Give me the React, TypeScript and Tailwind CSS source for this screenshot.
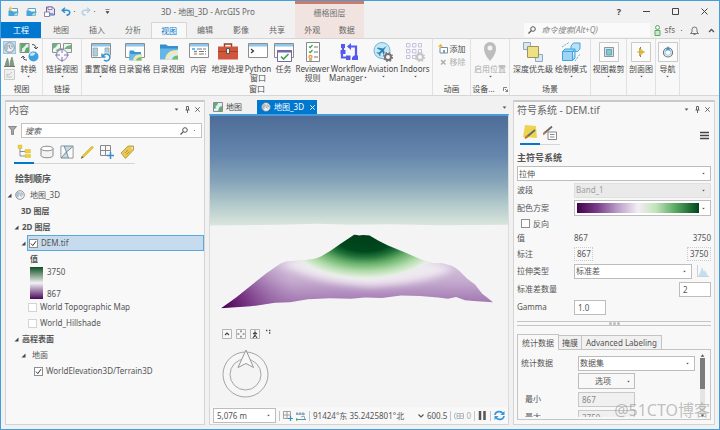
import React from "react";

type Kids = { children?: React.ReactNode };

const FONT = "font-['Noto_Sans','Noto_Sans_CJK_SC',sans-serif]";

/* ---------- small shared pieces ---------- */

function Caret({ className = "" }: { className?: string }) {
  return (
    <svg viewBox="0 0 6 4" className={`h-[3px] w-[5px] shrink-0 ${className}`} aria-hidden="true">
      <path d="M0.5 0.5h5L3 3.6z" fill="#555" />
    </svg>
  );
}

function Svg({ children, className = "size-5", box = "0 0 20 20" }: Kids & { className?: string; box?: string }) {
  return (
    <svg viewBox={box} className={`shrink-0 ${className}`} fill="none" aria-hidden="true">
      {children}
    </svg>
  );
}

function Select({ id, label, value, className = "", disabled = false }: { id: string; label: string; value: string; className?: string; disabled?: boolean }) {
  return (
    <span className={`flex h-[15px] items-center border pr-1 ${disabled ? "border-[#e0e0e0] bg-[#eaeaea] text-[#a0a0a0]" : "border-[#bdbdbd] bg-white"} ${className}`}>
      <select id={id} aria-label={label} disabled={disabled} className="h-full min-w-0 flex-1 appearance-none bg-transparent pl-px outline-none">
        <option>{value}</option>
      </select>
      <Caret className="scale-75" />
    </span>
  );
}

function Check({ id, label, checked = false, faint = false, className = "" }: { id: string; label: string; checked?: boolean; faint?: boolean; className?: string }) {
  return (
    <label htmlFor={id} className={`flex items-center gap-[3px] ${className}`}>
      <span className="grid size-[9px]">
        <input id={id} type="checkbox" defaultChecked={checked} className={`peer col-start-1 row-start-1 size-[9px] appearance-none border bg-white ${faint ? "border-[#d4d4d4]" : "border-[#8f8f8f]"}`} />
        <svg viewBox="0 0 9 9" className="pointer-events-none invisible col-start-1 row-start-1 size-[9px] peer-checked:visible" fill="none" aria-hidden="true">
          <path d="M2 4.6l1.800 2L7 2.200" stroke="#333" strokeWidth="1" />
        </svg>
      </span>
      <span>{label}</span>
    </label>
  );
}

function Twisty() {
  return (
    <svg viewBox="0 0 5 5" className="size-[5px] shrink-0" aria-hidden="true">
      <path d="M4.500 0.500v4h-4z" fill="#444" />
    </svg>
  );
}

/* ---------- icons ---------- */

function Globe({ className = "size-[11px]" }: { className?: string }) {
  return (
    <Svg className={className} box="0 0 12 12">
      <circle cx="6" cy="6" r="5.2" fill="#f1f3f5" stroke="#7c858c" />
      <path d="M1.500 4C3 1.800 5 2 5.400 3.600S4 5.200 4.500 6.500 3.500 9.500 2.600 9.200A5 5 0 0 1 1.500 4zM7 2.200l2.600 1.600.6 2.200-1.600.6L7.200 5z" fill="#a9bfce" />
      <path d="M6 3v3.500l2.500 1" stroke="#7c858c" strokeWidth=".8" />
    </Svg>
  );
}

function MapSheet({ className = "size-[10px]" }: { className?: string }) {
  return (
    <Svg className={className} box="0 0 10 10">
      <path d="M.5.5h9v9h-9z" fill="#dff0f6" stroke="#8a8a8a" />
      <path d="M1 1h4L4 3.500 2.500 4 3 6 1 7zM6.500 5L9 4v5H5z" fill="#63ab72" />
    </Svg>
  );
}

function FolderIcon({ star = false }: { star?: boolean }) {
  return (
    <Svg className="size-[11px]" box="0 0 11 11">
      <path d="M2 2.500h7.500v4H2z" fill="#fff" stroke="#5aa3d3" />
      <path d="M.5 4.500h3.500l1 1h5.500l-1 4.500h-9z" fill="#4aa4dc" />
      <path d="M6 9.500c.3-1.800 1.700-2.800 3.500-2.500l-.5 2.500z" fill="#bfe3b4" />
      {star && <path d="M2.500 0l.8 1.700L5 2.500l-1.700.8L2.500 5l-.8-1.700L0 2.500l1.700-.8z" fill="#eec643" />}
    </Svg>
  );
}

function SaveIcon() {
  return (
    <Svg className="size-[11px]" box="0 0 11 11">
      <path d="M2.500 1h6l2 2v6h-8z" fill="#e9e3f4" stroke="#77639c" />
      <path d="M4 1h4v2.500H4zM.5 6h5v4.500h-5z" fill="#fff" stroke="#77639c" strokeWidth=".8" />
      <path d="M5.500 8h4" stroke="#4d9ad0" strokeWidth="1.500" />
    </Svg>
  );
}

function UndoIcon({ flip = false }: { flip?: boolean }) {
  return (
    <Svg className={flip ? "h-[9px] w-[10px] -scale-x-100" : "h-[9px] w-[10px]"} box="0 0 10 9">
      <path d="M4 .8L1.200 3.200 4 5.800M1.500 3.200h4.500c4 0 3.500 4.600-.5 5" stroke={flip ? "#b4d2e6" : "#2f8fd0"} strokeWidth="1.500" />
    </Svg>
  );
}

function PaneWindow() {
  return (
    <>
      <path d="M.5 1.500h19v14H.5z" fill="#fff" stroke="#8d8d8d" />
      <path d="M1 2h18v2.500H1z" fill="#8cc6ea" />
    </>
  );
}

function ProjectFolder({ y = 0 }: { y?: number }) {
  return (
    <g transform={`translate(0 ${y})`}>
      <path d="M4.500 8V6.500h4L10 8h6v8H4.500z" fill="#3a97d3" />
      <path d="M4.500 10h12v6.500h-12z" fill="#6bbbea" />
      <path d="M8 16.500c.5-4.500 4-6.500 8.500-6v6.500z" fill="#f6e9a8" />
      <path d="M11 16.500c.4-2 2.500-3.500 5.500-3.500v3.500z" fill="#76bd77" />
    </g>
  );
}

function Gear({ color = "#747474" }: { color?: string }) {
  return (
    <g>
      <circle cx="15" cy="15" r="3" stroke={color} strokeWidth="2" />
      <circle cx="15" cy="15" r="4.300" stroke={color} strokeWidth="1.500" strokeDasharray="1.700 1.700" />
    </g>
  );
}

const icons: Record<string, React.ReactNode> = {
  convert: (
    <Svg>
      <path d="M1 1.500h9v9H1z" fill="#e3f0ef" stroke="#888" />
      <path d="M1.500 2h6L5 5 3 6.500v3H1.500zM7 6l3-1v5H5.500z" fill="#58ad69" />
      <path d="M13 2.500c3 0 4 1.500 4 4M15 5l2 2 2-2M8 18c-3 0-4-1-4-3.500M2 16l2-2 2 2" stroke="#555" />
      <circle cx="14.500" cy="14.500" r="5" fill="#3f9fdf" />
      <path d="M11 12c2-2 4-2 5.500-.5l-2 2-3 .5z" fill="#c5e8fb" />
    </Svg>
  ),
  link: (
    <Svg>
      <path d="M.5 1.500h8v9h-8zM11.500 1.500h8v9h-8z" fill="#edf5f2" stroke="#929292" />
      <path d="M1 2h5L4 5l-3 2zM12 7l3-3 4-1v4zM4 8l4-2v4H5z" fill="#6cb67c" />
      <circle cx="10" cy="13" r="5.500" fill="#f8f7fc" stroke="#9088b8" />
      <path d="M10 6v5M10 15v5M3 13h5M12 13h5" stroke="#8178ad" />
    </Svg>
  ),
  reset: (
    <Svg>
      <PaneWindow />
      <path d="M2 6h4.500v8H2zM14 6h4v8h-4z" fill="#a9cfe5" stroke="#999" strokeWidth=".7" />
      <circle cx="15" cy="15.500" r="5" fill="#f7f7f7" />
      <path d="M12 14.500a3.500 3.500 0 1 1 1 3.500M11 11.500v3.500h3.500" stroke="#2e93d5" strokeWidth="1.400" />
    </Svg>
  ),
  catalogPane: (
    <Svg>
      <PaneWindow />
      <ProjectFolder y={2} />
    </Svg>
  ),
  catalogView: (
    <Svg>
      <path d="M1 4V2.500h6L9 4h10v4H1z" fill="#348fcf" />
      <path d="M1 6.500h18v11H1z" fill="#64b5e8" />
      <path d="M6 17.500C7 11 11 8 19 8v9.500z" fill="#f4e8ae" />
      <path d="M9 17.500c1-4 4-6.500 10-6.500v6.500z" fill="#d4ecf5" />
      <path d="M13 17.500c.5-2.500 2.500-4 6-4v4z" fill="#72ba76" />
    </Svg>
  ),
  contents: (
    <Svg>
      <PaneWindow />
      <path d="M8 7h9M10 9.500h7M10 12h7" stroke="#777" strokeDasharray="5 1" />
      <path d="M3 7h3M5 9.500h3" stroke="#4b9ed3" strokeWidth="1.500" />
      <path d="M5 12h3" stroke="#e49a54" strokeWidth="1.500" />
    </Svg>
  ),
  toolbox: (
    <Svg>
      <path d="M6.500 5V2h7v3" stroke="#9c3d28" strokeWidth="1.500" />
      <path d="M0 4.500h20v13H0z" fill="#d0573b" />
      <path d="M0 9.500h20" stroke="#a53f27" />
      <path d="M8.500 6.500h3v5h-3z" fill="#eee" stroke="#555" />
    </Svg>
  ),
  python: (
    <Svg>
      <PaneWindow />
      <path d="M3 7l2.500 2L3 11" stroke="#333" strokeWidth="1.200" />
    </Svg>
  ),
  tasks: (
    <Svg>
      <PaneWindow />
      <path d="M3.500 8.500h14v11h-14z" fill="#fff" stroke="#7667a6" />
      <path d="M3.500 8h14v2.500h-14z" fill="#7667a6" />
      <path d="M7 14.500l2.500 2.500 5-5" stroke="#39a34c" strokeWidth="1.600" />
    </Svg>
  ),
  reviewer: (
    <Svg>
      <path d="M3.500.5h13v19h-13z" fill="#fff" stroke="#888" />
      <path d="M6 4.500l1.200 1.200L9.500 3M6 9.500l1.200 1.200L9.500 8" stroke="#39a34c" strokeWidth="1.200" />
      <circle cx="7.500" cy="15" r="1.500" stroke="#ef9a32" strokeWidth="1.300" />
      <path d="M11 5h4M11 10h4M11 15h4M6 18h3" stroke="#777" />
    </Svg>
  ),
  workflow: (
    <Svg>
      <path d="M4 5v5M3 10v5.500h5M11 4.500h6v10" stroke="#5459ef" strokeWidth="2.200" />
      <path d="M2 2h4v4H2zM1.500 8h5v4h-5zM7 13.500h4.500v4.500H7zM15 13.500h4v4.500h-6v-2.500z" fill="#5459ef" />
      <path d="M12 1v7L8 4.500z" fill="#5459ef" />
    </Svg>
  ),
  aviation: (
    <Svg>
      <circle cx="9" cy="8.500" r="8" fill="#c5e7f6" stroke="#6fb6d8" />
      <path d="M13.500 4L10 6.500 5 5.500l-1 1 4 2L6 10.500l-1.800-.2-.7.8 2.200 1 1 2.200.8-.7-.2-1.800 2-1.800 1.700 3.800 1-1L11 8z" fill="#2f83b6" />
      <circle cx="15" cy="15" r="5" fill="#f7f7f7" />
      <Gear />
    </Svg>
  ),
  indoors: (
    <Svg>
      <path d="M1.500 1.500h3.500v3.500H1.500zM7.500 1.500h3.500v3.500H7.500zM13.500 1.500h3v3.500h-3zM1.500 7.500h3.500v3.500H1.500zM7.500 7.500h3.500v3.500H7.500zM13.500 7.500h3v3.500h-3zM1.500 13.500h3.500v3H1.500zM7.500 13.500h3.500v3H7.500z" stroke="#c3c1df" strokeWidth="1" />
      <Gear color="#c6c6c6" />
    </Svg>
  ),
  location: (
    <Svg>
      <path d="M10 0a6 6 0 0 1 6 6c0 4-1 5.500-2 7.500-1 2-2.500 3.500-4 5.500-1.500-2-3-3.500-4-5.500C5 11.500 4 10 4 6a6 6 0 0 1 6-6z" fill="#bdbdbd" />
      <circle cx="10" cy="6" r="2.500" fill="#f3f3f3" />
    </Svg>
  ),
  depth: (
    <Svg>
      <path d="M.5.5h7v7h-7zM12.500 12.500h7v7h-7z" fill="#d8e9f5" stroke="#92aabd" />
      <path d="M4.500 4.500h11v11h-11z" fill="#ede184" stroke="#9d9464" />
    </Svg>
  ),
  drawMode: (
    <Svg>
      <path d="M10 4l2.500-3H19v6l-2.500 2.500H10z" fill="#b9e0f7" stroke="#3fa4df" />
      <path d="M1.500 9.500h10v9h-10zM1.500 9.500L4 7h10l-2.500 2.500M14 7v9l-2.500 2.500" fill="#9ed4f4" stroke="#3fa4df" />
      <path d="M1 5l7-4.500M14 19l5-7" stroke="#5caedc" strokeDasharray="2 1" />
    </Svg>
  ),
  clip: (
    <Svg>
      <path d="M.5.5h19v19H.5z" fill="#fbfbfb" stroke="#c9c9c9" />
      <path d="M5.500 5.500h9v9h-9z" fill="#d9e2ea" stroke="#8b959d" />
      <path d="M7.500 7.500h5v5.500h-5z" fill="#89cbb8" stroke="#57a6c9" />
    </Svg>
  ),
  profile: (
    <Svg>
      <path d="M.5.5h19v19H.5z" fill="#fbfbfb" stroke="#c9c9c9" />
      <path d="M9.500 5v10" stroke="#555" strokeWidth=".8" />
      <path d="M6 10h8M8.500 6l4 4-4 4z" fill="#edc539" stroke="#c69f34" strokeWidth=".8" />
    </Svg>
  ),
  navigate: (
    <Svg>
      <path d="M.5.5h19v19H.5z" fill="#fbfbfb" stroke="#c9c9c9" />
      <circle cx="10" cy="10.500" r="4.500" stroke="#65737c" strokeWidth="1.200" />
      <circle cx="10" cy="10.500" r="2.800" stroke="#9bc9e3" />
      <path d="M10 4l2.500 5-2.500-1-2.500 1z" fill="#3f96cf" />
    </Svg>
  ),
};

/* ---------- ribbon ---------- */

function Tool({ icon, label, second, caret = false, width, muted = false }: { icon: string; label: string; second?: string; caret?: boolean; width: string; muted?: boolean }) {
  return (
    <button type="button" className={`flex flex-col items-center whitespace-nowrap leading-[9px] ${width} ${muted ? "text-[#a9a9a9]" : ""}`}>
      {icons[icon]}
      <span className="mt-0.5">{label}</span>
      {second && (
        <span className="flex items-center">
          {second}
          {caret && <Caret className="scale-75" />}
        </span>
      )}
      {caret && !second && <Caret className="mt-0.5 scale-75" />}
    </button>
  );
}

function Group({ label, width, children, launcher = false }: Kids & { label?: string; width: string; launcher?: boolean }) {
  return (
    <section className={`flex flex-col border-r border-[#e1e1e1] pt-[3px] ${width}`}>
      <div className="flex flex-1 items-start justify-center">{children}</div>
      <div className="flex h-3 items-center justify-center gap-2 whitespace-nowrap">
        {label}
        {launcher && (
          <Svg className="size-[5px]" box="0 0 5 5">
            <path d="M.5 4V.5H4M2 2l2.500 2.500M4.500 2.500v2h-2" stroke="#666" strokeWidth=".8" />
          </Svg>
        )}
      </div>
    </section>
  );
}

function TitleBar() {
  return (
    <header className="flex h-[21px] shrink-0">
      <div className="flex w-[294px] items-center">
        <div className="flex w-[160px] items-center pl-[7px]">
          <button type="button" aria-label="新建工程"><FolderIcon star /></button>
          <button type="button" aria-label="打开工程" className="ml-[7px]"><FolderIcon /></button>
          <button type="button" aria-label="保存工程" className="ml-[7px]"><SaveIcon /></button>
          <button type="button" aria-label="撤消" className="ml-1.5 flex items-center gap-px"><UndoIcon /><Caret className="scale-50" /></button>
          <button type="button" aria-label="恢复" className="ml-1 flex items-center gap-px"><UndoIcon flip /><Caret className="scale-50" /></button>
          <button type="button" aria-label="自定义快速访问工具栏" className="ml-2">
            <Svg className="size-[5px]" box="0 0 5 5"><path d="M.5 .5h4M1 2.500h3L2.500 4.500z" fill="#444" stroke="#444" strokeWidth=".6" /></Svg>
          </button>
        </div>
        <h1 className="text-[#666]">3D - 地图_3D - ArcGIS Pro</h1>
      </div>
      <div className="flex w-[69px] items-center justify-center border-t-[3px] border-[#d07a68] bg-[#f1e3df] text-[#777]">栅格图层</div>
      <div className="flex flex-1 items-center justify-end gap-[22px] pr-[11px]">
        <button type="button" aria-label="帮助" className="text-[9px] font-bold text-[#444]">?</button>
        <button type="button" aria-label="最小化"><Svg className="size-[7px]" box="0 0 7 7"><path d="M0 3.500h7" stroke="#444" /></Svg></button>
        <button type="button" aria-label="最大化"><Svg className="size-[7px]" box="0 0 7 7"><path d="M.5.5h6v6h-6z" stroke="#444" /></Svg></button>
        <button type="button" aria-label="关闭"><Svg className="size-[7px]" box="0 0 7 7"><path d="M.5.5l6 6m0-6l-6 6" stroke="#444" /></Svg></button>
      </div>
    </header>
  );
}

function TabRow() {
  const tabs = ["地图", "插入", "分析", "视图", "编辑", "影像", "共享"];
  return (
    <nav className="flex h-4 shrink-0 text-[#666]">
      <button type="button" className="mr-0.5 w-10 bg-[#0078d0] text-white">工程</button>
      {tabs.map((t) => (
        <button key={t} type="button" className={t === "视图" ? "w-9 border border-b-0 border-[#d6d6d6] bg-[#f8f8f8] text-[#0078d0]" : "w-9"}>{t}</button>
      ))}
      <div className="flex w-[69px] bg-[#f1e3df]">
        <button type="button" className="w-9">外观</button>
        <button type="button" className="w-9">数据</button>
      </div>
      <div className="flex min-w-0 flex-1 items-center justify-end pr-1">
        <label className="flex h-3.5 w-[126px] items-center gap-1.5 bg-[#fafafa] pl-1">
          <SearchGlyph />
          <input aria-label="命令搜索" placeholder="命令搜索(Alt+Q)" className="min-w-0 flex-1 italic outline-none placeholder:text-[#888]" />
        </label>
        <button type="button" className="ml-1 flex items-center gap-1">
          <Svg className="h-[11px] w-[7px]" box="0 0 7 11">
            <circle cx="3.500" cy="2.500" r="2" stroke="#5fa968" />
            <path d="M1 5.500h5v5H1z" fill="#cbe8ca" stroke="#5fa968" />
          </Svg>
          sfs
          <Caret className="scale-50" />
        </button>
        <button type="button" aria-label="通知" className="ml-1.5">
          <Svg className="size-[9px]" box="0 0 9 9"><path d="M.5 7.500h8L7 6V3.500a2.500 2.500 0 0 0-5 0V6zM3.500 8.500h2" stroke="#666" strokeWidth=".9" /></Svg>
        </button>
        <button type="button" aria-label="折叠功能区" className="ml-[9px]">
          <Svg className="h-[5px] w-[7px]" box="0 0 7 5"><path d="M1 4l2.500-2.500L6 4" stroke="#555" strokeWidth="1.300" /></Svg>
        </button>
      </div>
    </nav>
  );
}

function SearchGlyph() {
  return (
    <Svg className="size-2" box="0 0 8 8">
      <circle cx="5" cy="3" r="2.300" stroke="#555" />
      <path d="M3.300 4.700L.5 7.500" stroke="#555" strokeWidth="1.200" />
    </Svg>
  );
}

function Ribbon() {
  return (
    <div className="flex h-[58px] shrink-0 border-y border-[#d6d6d6] bg-[#f8f8f8]">
      <Group label="视图" width="w-[42px]">
        <div className="flex w-[14px] flex-col items-center gap-0.5">
          <span className="-mt-px flex h-[13px] w-[13px] items-center justify-center border border-[#9fc4df] bg-[#c6dcec]"><Globe className="size-[11px]" /></span>
          <Svg className="size-[11px]" box="0 0 11 11">
            <path d="M1 10l1-4 1.500-4 1 4 .5 4zM6 10l.5-5L8 1l1 4 1 5z" fill="#7f9b83" stroke="#68806c" strokeWidth=".6" />
            <path d="M0 10.500h11" stroke="#777" />
          </Svg>
          <Svg className="size-[11px]" box="0 0 11 11">
            <path d="M.5.5h10v10H.5z" fill="#efefef" stroke="#ccc" />
            <path d="M3 8V5l2 1 3-3M3 8h5" stroke="#c4c4c4" />
          </Svg>
        </div>
        <Tool icon="convert" label="转换" caret width="w-6" />
      </Group>
      <Group label="链接" width="w-[39px]"><Tool icon="link" label="链接视图" caret width="w-9" /></Group>
      <Group label="窗口" width="w-[351px]">
        <Tool icon="reset" label="重置窗格" caret width="w-[34px]" />
        <Tool icon="catalogPane" label="目录窗格" width="w-[34px]" />
        <Tool icon="catalogView" label="目录视图" width="w-[34px]" />
        <Tool icon="contents" label="内容" width="w-[26px]" />
        <Tool icon="toolbox" label="地理处理" width="w-[32px]" />
        <Tool icon="python" label="Python" second="窗口" width="w-[29px]" />
        <Tool icon="tasks" label="任务" width="w-[22px]" />
        <Tool icon="reviewer" label="Reviewer" second="规则" width="w-9" />
        <Tool icon="workflow" label="Workflow" second="Manager" caret width="w-9" />
        <Tool icon="aviation" label="Aviation" caret width="w-[33px]" />
        <Tool icon="indoors" label="Indoors" caret width="w-[31px]" />
      </Group>
      <Group label="动画" width="w-[38px]">
        <div className="flex flex-col gap-[3px] pt-0.5">
          <button type="button" className="flex items-center gap-0.5 leading-[10px]">
            <Svg className="size-[10px]" box="0 0 10 10">
              <path d="M2 3.500h7.500V9H2z" fill="#fff" stroke="#7f8b93" />
              <path d="M5 6h2v3H5z" fill="#5faad8" />
              <path d="M2.500 0v4M.5 2h4" stroke="#e4bb3f" strokeWidth="1.300" />
            </Svg>
            添加
          </button>
          <button type="button" className="flex items-center gap-0.5 leading-[10px] text-[#b0b0b0]">
            <Svg className="size-[10px]" box="0 0 10 10"><path d="M3 3l4.500 4.500M7.500 3L3 7.500" stroke="#aaa" strokeWidth="1.300" /></Svg>
            移除
          </button>
        </div>
      </Group>
      <Group label="设备..." width="w-[39px]" launcher><Tool icon="location" label="启用位置" caret width="w-9" muted /></Group>
      <Group label="场景" width="w-[81px]">
        <Tool icon="depth" label="深度优先级" width="w-[42px]" />
        <Tool icon="drawMode" label="绘制模式" caret width="w-[34px]" />
      </Group>
      <Group width="w-9"><Tool icon="clip" label="视图裁剪" caret width="w-9" /></Group>
      <Group width="w-[29px]"><Tool icon="profile" label="剖面图" caret width="w-7" /></Group>
      <Group width="w-6"><Tool icon="navigate" label="导航" caret width="w-6" /></Group>
    </div>
  );
}

/* ---------- dock panes ---------- */

function PaneHeader({ title }: { title: string }) {
  return (
    <div className="flex h-[17px] shrink-0 items-center border-t-2 border-[#c9c9c9] pr-1 pl-[3px]">
      <h2 className="flex-1 text-[10px] text-[#666]">{title}</h2>
      <button type="button" aria-label="选项"><Caret /></button>
      <button type="button" aria-label="固定" className="ml-1.5">
        <Svg className="h-[7px] w-[5px]" box="0 0 5 7"><path d="M1.500.5h2v3.500M1.500.5v3.500M.5 4h4M2.500 4v3" stroke="#555" strokeWidth=".9" /></Svg>
      </button>
      <button type="button" aria-label="关闭窗格" className="ml-[5px]">
        <Svg className="size-[5px]" box="0 0 5 5"><path d="M.3.3l4.400 4.400m0-4.400L.3 4.700" stroke="#555" strokeWidth=".9" /></Svg>
      </button>
    </div>
  );
}

function ContentsPane() {
  return (
    <aside className="flex w-[200px] shrink-0 flex-col border-x border-b border-[#d4d4d4] bg-[#f8f8f8]">
      <PaneHeader title="内容" />
      <div className="mt-1.5 flex items-center gap-1 pr-0.5 pl-0.5">
        <Svg className="size-[9px]" box="0 0 9 9"><path d="M.5.5h8L5.500 4v4.500h-2V4z" fill="#aaa" stroke="#777" strokeWidth=".8" /></Svg>
        <label className="flex h-[15px] flex-1 items-center border border-[#c3c3c3] bg-white pr-1 pl-[3px]">
          <input aria-label="搜索" placeholder="搜索" className="min-w-0 flex-1 italic outline-none placeholder:text-[#555]" />
          <SearchGlyph />
          <Caret className="ml-1 scale-50" />
        </label>
      </div>
      <div className="mt-1.5 ml-2 flex w-[121px] gap-1.5 border-b border-[#d5d5d5]">
        {[
          <><path d="M3 3v9h5M3 7.500h5" stroke="#777" strokeWidth=".8" /><path d="M1 1h4v3.500H1zM8 5.500h5.500v3.500H8zM8 10.500h5.500v3H8z" fill="#ecd03f" stroke="#d5b72f" strokeWidth=".4" /></>,
          <><path d="M1 3.500v7c0 3 12 3 12 0v-7" fill="#f2f2f2" stroke="#8a8a8a" /><ellipse cx="7" cy="3.500" rx="6" ry="2.300" fill="#fff" stroke="#8a8a8a" /></>,
          <><path d="M1 1h12v12H1z" fill="#b9dcee" stroke="#888" /><path d="M1.500 1.500H4L6 6l-4.500 6.500zM7 7l5.500-5.500v11H8z" fill="#fafafa" /><path d="M4 1l2.500 6L13 1.500M6.500 7L8.500 13M6.500 7L1 13" stroke="#777" strokeWidth=".8" /></>,
          <><path d="M1 13.500L3 10 12 1l1.500 1.500-9 9z" fill="#e7c832" stroke="#c5a328" strokeWidth=".5" /><path d="M1 13.500L2 11l1.500 1.500z" fill="#555" /></>,
          <><path d="M.5.5h10v10H.5zM5.500.5v10M.5 5.500h10" stroke="#888" /><path d="M10.500 7v7M7 10.500h7" stroke="#358ec8" strokeWidth="1.500" /></>,
          <><path d="M1 8l7-7h5.500v4l-8 8.500z" fill="#e8c956" stroke="#ae9235" strokeWidth=".8" /><path d="M5 8l3-3M6.500 9.500l3-3" stroke="#a17d2d" strokeWidth=".7" /><circle cx="12" cy="3" r=".8" fill="#fff" /></>,
        ].map((icon, i) => (
          <button key={i} type="button" aria-label={["按绘制顺序列出", "按数据源列出", "按选择列出", "按编辑列出", "按捕捉列出", "按标注列出"][i]} className={i === 0 ? "-mb-px w-5 border-b-2 border-[#0078d0] pb-1" : "pb-1"}>
            <Svg className="mx-auto size-3.5" box="0 0 14 14">{icon}</Svg>
          </button>
        ))}
      </div>
      <h3 className="mt-[7px] ml-[9px] text-[9px] leading-[16px] font-bold text-[#555]">绘制顺序</h3>
      <ul className="text-[#555] *:flex *:h-4 *:items-center">
        <li className="gap-[3px] pl-px"><Twisty /><Globe className="size-[10px]" /><span className="ml-0.5">地图_3D</span></li>
        <li className="pl-[15px] font-bold">3D 图层</li>
        <li className="gap-[3px] pl-2 font-bold"><Twisty />2D 图层</li>
        <li className="gap-px pl-[15px]">
          <Twisty />
          <span className="flex h-full flex-1 items-center border border-[#5aa9dd] bg-[#c6dbed] pl-px">
            <Check id="dem" label="DEM.tif" checked />
          </span>
        </li>
        <li className="pl-6 font-bold">值</li>
      </ul>
      <div className="ml-6 flex gap-1 text-[#555]">
        <span className="h-8 w-[13px] bg-linear-to-b from-[#005024] via-[#f4f2f4] to-[#4a005a]" />
        <span className="flex flex-col justify-between leading-[10px]"><span>3750</span><span>867</span></span>
      </div>
      <ul className="text-[#555] *:flex *:h-4 *:items-center">
        <li className="pl-[22px]"><Check id="topo" label="World Topographic Map" faint /></li>
        <li className="pl-[22px]"><Check id="hill" label="World_Hillshade" faint /></li>
        <li className="gap-[3px] pl-2 font-bold"><Twisty />高程表面</li>
        <li className="gap-1.5 pl-[15px]"><Twisty />地面</li>
        <li className="pl-7"><Check id="terrain" label="WorldElevation3D/Terrain3D" checked /></li>
      </ul>
    </aside>
  );
}

const OUTLINE =
  "M11 193L26 182 41 170 56 158 66 151Q71 147 76 146L90 145 101 144Q107 143 111 141L121 135 131 128 144.500 119 149 120 153 119.500 159.500 120 168 125 178 130 195 137 211 144Q218 147 225 148L231 147.500 241 150Q246 152 250 156L257 163 265 169 272 178 283 187 267 186 255 185 246 181.500 238 183.500 228 182 210 180.500 191 180 172 182.500 155 182 141 183.500 120 183 98 184 80 187 65 187.500 41 191Z";

function Scene() {
  return (
    <svg viewBox="0 0 298 292" preserveAspectRatio="none" className="col-start-1 row-start-1 h-full w-full" role="img" aria-label="3D 场景">
      <defs>
        <linearGradient id="sky" x1="0" y1="0" x2="0" y2="1">
          <stop offset="0" stopColor="#4d6d98" />
          <stop offset=".35" stopColor="#6485ac" />
          <stop offset=".6" stopColor="#86a5b9" />
          <stop offset=".8" stopColor="#b1c8ca" />
          <stop offset="1" stopColor="#dae6dc" />
        </linearGradient>
        <linearGradient id="base" x1="0" y1="144" x2="0" y2="192" gradientUnits="userSpaceOnUse">
          <stop offset="0" stopColor="#d8c8df" />
          <stop offset=".45" stopColor="#c5abcf" />
          <stop offset="1" stopColor="#9a6baa" />
        </linearGradient>
        <radialGradient id="corner" cx="12" cy="194" r="75" gradientUnits="userSpaceOnUse">
          <stop offset="0" stopColor="#43004c" />
          <stop offset=".35" stopColor="#702a7c" stopOpacity=".85" />
          <stop offset="1" stopColor="#9a6baa" stopOpacity="0" />
        </radialGradient>
        <radialGradient id="cone" cx="0" cy="0" r="1" gradientUnits="userSpaceOnUse" gradientTransform="translate(155 119) scale(86 47)">
          <stop offset="0" stopColor="#003d19" />
          <stop offset=".36" stopColor="#00481d" />
          <stop offset=".48" stopColor="#22743a" />
          <stop offset=".62" stopColor="#68b06b" />
          <stop offset=".78" stopColor="#b0dba9" />
          <stop offset=".92" stopColor="#e6efe4" />
          <stop offset="1" stopColor="#efe9f1" stopOpacity="0" />
        </radialGradient>
        <clipPath id="terrain-clip"><path d={OUTLINE} /></clipPath>
        <filter id="soft" x="-20%" y="-20%" width="140%" height="140%"><feGaussianBlur stdDeviation="4" /></filter>
      </defs>
      <path d="M0 0h298v292H0z" fill="#f4f4f4" />
      <path d="M0 0h298v109l-68 .5-50-1-40 .5-30-1-40 1-70 1z" fill="url(#sky)" />
      <path d={OUTLINE} fill="url(#base)" />
      <g clipPath="url(#terrain-clip)">
        <path d={OUTLINE} fill="url(#corner)" />
        <path d="M72 148Q150 118 244 153 220 168 160 171 100 167 72 148z" fill="#eee8f0" filter="url(#soft)" />
        <ellipse cx="155" cy="119" rx="86" ry="47" fill="url(#cone)" />
      </g>
    </svg>
  );
}

function Divider() {
  return <i className="h-2.5 w-px shrink-0 bg-[#c5c5c5]" />;
}

function MapView() {
  return (
    <main className="flex min-w-0 flex-1 flex-col">
      <div className="flex h-[14px] shrink-0 items-center">
        <button type="button" className="flex h-full w-[48px] items-center gap-[3px] pl-1"><MapSheet />地图</button>
        <div className="flex h-full w-[60px] items-center gap-[3px] bg-[#0078d0] pl-1 text-white">
          <Globe className="size-[10px]" />
          <button type="button">地图_3D</button>
          <button type="button" aria-label="关闭视图" className="ml-[3px]"><Svg className="size-[5px]" box="0 0 5 5"><path d="M.3.3l4.400 4.400m0-4.400L.3 4.700" stroke="#fff" /></Svg></button>
        </div>
        <button type="button" aria-label="视图列表" className="mr-0.5 ml-auto"><Caret /></button>
      </div>
      <div className="grid min-h-0 flex-1 grid-rows-1 border-x border-t-2 border-[#dcdcdc] border-t-[#459ddb]">
        <Scene />
        <div className="col-start-1 row-start-1 self-end pb-[9px] pl-3">
          <div className="flex gap-1">
            {[
              ["显示全部控件", "M3 6l2-2 2 2"],
              ["全图范围", "M5 1.500v1.800M5 6.700v1.800M1.500 5h1.800M6.700 5h1.800"],
              ["漫游", "M5 1.500v1M5 3.500v2.500l-2 3M5 6l2 3M3 5l2-1.500L7 5"],
            ].map(([name, d]) => (
              <button key={name} type="button" aria-label={name}>
                <Svg className="size-[10px]" box="0 0 10 10"><path d="M.5.5h9v9h-9z" fill="#f7f7f7" stroke="#b5b5b5" /><path d={d} stroke="#444" strokeWidth="1.100" /></Svg>
              </button>
            ))}
            <Svg className="size-[10px]" box="0 0 10 10"><path d="M2 1.500h1.300M5 1.500h1.300M5 4h1.300" stroke="#444" strokeWidth="1.300" /></Svg>
          </div>
          <Svg className="mt-2.5 h-[49px] w-[47px]" box="0 0 47 49">
            <circle cx="23.500" cy="25.500" r="22.500" fill="#f7f7f7" fillOpacity=".5" stroke="#a5a5a5" />
            <circle cx="23.500" cy="25.500" r="15.500" fill="#f4f4f4" stroke="#a5a5a5" />
            <path d="M24 1l7.500 17.500-7.500-4-8 4z" fill="#f8f8f8" stroke="#999" />
          </Svg>
        </div>
      </div>
      <div className="flex h-[18px] shrink-0 items-center gap-[3px] border border-t-0 border-[#d4d4d4] bg-[#f8f8f8] px-[3px] text-[#555]">
        <Select id="scale" label="比例" value="5,076 m" className="w-[63px] shrink-0 pl-0.5" />
        <Divider />
        <button type="button" aria-label="捕捉"><Svg className="size-[10px]" box="0 0 10 10"><path d="M.5.5h7v7h-7zM4 .5v7M.5 4h7" stroke="#888" strokeWidth=".8" /><path d="M7.500 5v5M5 7.500h5" stroke="#358ec8" strokeWidth="1.200" /></Svg></button>
        <button type="button" aria-label="地面到格网校正"><Svg className="size-[10px]" box="0 0 10 10"><path d="M0 3h9M0 8.500h10" stroke="#4794c6" /><path d="M1 1v3M4 1v3M7 1v3M5 6l3-1 1 3" stroke="#777" strokeWidth=".7" /><path d="M0 7l3 1.500L0 10z" fill="#4caf50" /></Svg></button>
        <Divider />
        <span className="flex-1 whitespace-nowrap">91424°东 35.2425801°北</span>
        <Svg className="h-[4px] w-[6px]" box="0 0 6 4"><path d="M.5.5L3 3 5.500.5" stroke="#555" strokeWidth="1.200" /></Svg>
        <span className="whitespace-nowrap">600.5</span>
        <Divider />
        <button type="button" className="flex items-center gap-0.5 text-[#aaa]">
          <Svg className="size-[10px]" box="0 0 10 10"><path d="M3 2.500h6.500v5H3zM6 2.500v5M3 5h6.500" stroke="#aaa" strokeWidth=".8" /><path d="M2 1.500c-2 2-2 5 0 7" stroke="#8bbcdc" /></Svg>0
        </button>
        <Divider />
        <button type="button" aria-label="暂停绘制"><Svg className="size-[9px]" box="0 0 9 9"><path d="M2 0v9M6.500 0v9" stroke="#555" strokeWidth="2.500" /></Svg></button>
        <Divider />
        <button type="button" aria-label="刷新"><Svg className="size-[11px]" box="0 0 11 11"><path d="M1 5C1.500 1 7 .5 9 3.500M10 6C9.500 10 4 10.500 2 7.500" stroke="#3598dc" strokeWidth="1.700" /><path d="M10.500 1v4h-4zM.5 10V6h4z" fill="#3598dc" /></Svg></button>
      </div>
    </main>
  );
}

function Field({ label, htmlFor, height, children }: Kids & { label: string; htmlFor?: string; height: string }) {
  return (
    <div className={`flex items-center ${height}`}>
      <label htmlFor={htmlFor} className="w-[57px] shrink-0">{label}</label>
      {children}
    </div>
  );
}

function SymbologyPane() {
  return (
    <aside className="flex w-[202px] shrink-0 flex-col border-x border-b border-[#d4d4d4] bg-[#f8f8f8]">
      <PaneHeader title="符号系统 - DEM.tif" />
      <div className="flex min-h-0 flex-1 flex-col px-[3px] pb-1 text-[#555]">
        <div className="mt-2 flex items-center justify-between pr-0.5 pl-[3px]">
          <div className="flex w-10 border-b border-[#d5d5d5]">
            <button type="button" aria-label="主符号系统" className="-mb-px w-5 border-b-2 border-[#0078d0] pb-1">
              <Svg className="mx-auto size-3.5" box="0 0 14 14"><path d="M2 0l11 1 1 12-14-1z" fill="#ead451" /><path d="M3 12.500L12 5" stroke="#666" strokeWidth="1.800" /><path d="M2 13.500l3-3" stroke="#c9772f" strokeWidth="1.800" /></Svg>
            </button>
            <button type="button" aria-label="变换" className="w-5 pb-1">
              <Svg className="mx-auto size-3.5" box="0 0 14 14"><path d="M5 6h8.500v7.500H5zM7 8.500h4.500M7 11h4.500" fill="#fff" stroke="#888" /><path d="M1 7.500L9 .5" stroke="#666" strokeWidth="1.800" /><path d="M0 8.500L2.500 6" stroke="#c9772f" strokeWidth="1.800" /></Svg>
            </button>
          </div>
          <button type="button" aria-label="菜单"><Svg className="size-[9px]" box="0 0 9 9"><path d="M0 1.500h9M0 4.500h9M0 7.500h9" stroke="#444" strokeWidth="1.500" /></Svg></button>
        </div>
        <h3 className="mt-[5px] text-[9px] leading-[16px] font-bold">主符号系统</h3>
        <Select id="primary" label="主符号系统" value="拉伸" />
        <Field label="波段" htmlFor="band" height="h-[18px]"><Select id="band" label="波段" value="Band_1" disabled className="flex-1" /></Field>
        <Field label="配色方案" height="h-[18px]">
          <button type="button" aria-label="配色方案" className="flex h-4 flex-1 items-center justify-between border border-[#bdbdbd] bg-white pr-1 pl-0.5">
            <span className="h-2.5 w-[122px] bg-[linear-gradient(to_right,#42004b,#7b3f8a_17%,#b99bc8_33%,#f3eef4_50%,#bfe3b8_65%,#4c9f57_83%,#00441b)]" />
            <Caret className="scale-75" />
          </button>
        </Field>
        <Check id="invert" label="反向" className="h-[13px] pl-1" />
        <Field label="值" height="h-[15px]"><span className="flex-1">867</span><span>3750</span></Field>
        <Field label="标注" htmlFor="lo" height="h-[17px]">
          <input id="lo" defaultValue="867" className="h-3.5 w-[19px] border border-dotted border-[#ccc] pl-0.5" />
          <input aria-label="标注上限" defaultValue="3750" className="ml-auto h-3.5 w-6 border border-dotted border-[#ccc] pl-0.5" />
        </Field>
        <Field label="拉伸类型" htmlFor="stretch" height="h-[18px]">
          <Select id="stretch" label="拉伸类型" value="标准差" className="flex-1" />
          <button type="button" aria-label="直方图" className="mr-0.5 ml-[5px]"><Svg className="size-3" box="0 0 12 12"><path d="M1 11l2-3 2-6 2 5 1-2 3 6z" fill="#c4deef" /><path d="M.5 0v11.500H12" stroke="#d0d0d0" /></Svg></button>
        </Field>
        <Field label="标准差数量" htmlFor="sd" height="h-[18px]"><input id="sd" defaultValue="2" className="ml-auto h-[15px] w-8 border border-[#bdbdbd] bg-white pl-[3px]" /></Field>
        <Field label="Gamma" htmlFor="gamma" height="h-[18px]"><input id="gamma" defaultValue="1.0" className="h-[15px] w-8 border border-[#bdbdbd] bg-white pl-[3px]" /></Field>
        <div className="mt-[5px] flex h-[5px] shrink-0 items-center justify-center gap-px border-y border-[#c4c4c4] *:size-[3px] *:rounded-full *:bg-[#bbb]"><i /><i /><i /></div>
        <div className="z-10 mt-2 -mb-px flex h-4 shrink-0 items-end">
          <button type="button" className="h-4 w-[42px] border border-b-0 border-[#c4c4c4] bg-[#f8f8f8]">统计数据</button>
          <button type="button" className="h-[15px] w-[23px] border border-l-0 border-[#c4c4c4] bg-[#f1f1f1]">掩膜</button>
          <button type="button" className="h-[15px] border border-l-0 border-[#c4c4c4] bg-[#f1f1f1] px-1 whitespace-nowrap">Advanced Labeling</button>
        </div>
        <div className="grid min-h-0 flex-1 grid-rows-1 border border-[#c4c4c4]">
          <div className="col-start-1 row-start-1 flex min-h-0 overflow-hidden pt-1 pr-1 pb-0.5 pl-[3px]">
            <div className="flex-1 overflow-hidden">
              <Field label="统计数据" htmlFor="stats" height="h-[18px]"><Select id="stats" label="统计数据" value="数据集" className="flex-1" /></Field>
              <Field label="" height="h-[18px]"><button type="button" className="flex h-4 w-[57px] items-center justify-between border border-[#bdbdbd] pr-[3px] pl-4">选项<Caret className="scale-75" /></button></Field>
              <div className="*:*:first:pl-1">
                <Field label="最小" htmlFor="min" height="h-[18px]"><input id="min" readOnly defaultValue="867" className="h-[15px] w-[57px] border border-[#c8c8c8] bg-[#f0f0f0] pl-[3px] text-[#888]" /></Field>
                <Field label="最大" htmlFor="max" height="h-[18px]"><input id="max" readOnly defaultValue="3750" className="h-[15px] w-[57px] border border-[#c8c8c8] bg-[#f0f0f0] pl-[3px] text-[#888]" /></Field>
              </div>
            </div>
            <div className="ml-1 flex w-[7px] flex-col items-center">
              <Caret className="rotate-180" />
              <span className="mt-px h-[31px] w-[5px] shrink-0 bg-[#7c7c7c]" />
              <span className="w-[5px] flex-1 bg-[#e4e4e4]" />
              <Caret />
            </div>
          </div>
          <span className="pointer-events-none col-start-1 row-start-1 self-end justify-self-end text-[16px] leading-[18px] text-[#777]/45">@51CTO博客</span>
        </div>
      </div>
    </aside>
  );
}

export default function App() {
  return (
    <div className={`flex h-screen flex-col overflow-hidden border border-[#459ddb] bg-[#f1f1f1] text-[8px] leading-[12px] text-[#4a4a4a] ${FONT}`}>
      <TitleBar />
      <TabRow />
      <Ribbon />
      <div className="flex min-h-0 flex-1 gap-1 px-1 pt-1 pb-1">
        <ContentsPane />
        <MapView />
        <SymbologyPane />
      </div>
    </div>
  );
}
